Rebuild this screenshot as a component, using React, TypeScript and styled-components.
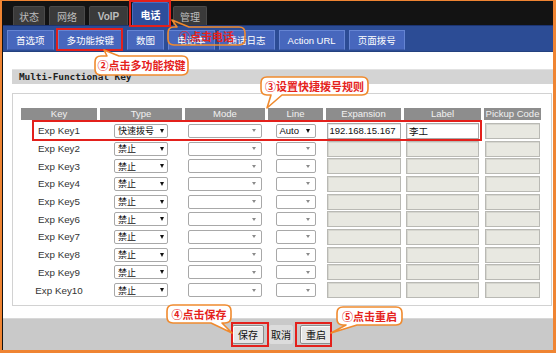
import React from 'react';
import styled, { createGlobalStyle } from 'styled-components';

const CJK = `"Noto Sans CJK SC", "Liberation Sans", sans-serif`;
const LATIN = `"Liberation Sans", "Noto Sans CJK SC", sans-serif`;

const GlobalStyle = createGlobalStyle`
  html, body { margin: 0; padding: 0; background: #ffffff; }
  body { font-family: ${LATIN}; }
`;

const Page = styled.div`
  position: relative;
  width: 556px;
  height: 353px;
  overflow: hidden;
`;

const Frame = styled.div`
  width: 556px;
  height: 353px;
  box-sizing: border-box;
  border-style: solid;
  border-color: #ef8432;
  border-width: 1px 3px 3px 2px;
  background: #fff;
`;

const Screen = styled.div`
  display: flex;
  flex-direction: column;
  height: 100%;
  border-left: 1px solid #111;
`;

const TopBar = styled.div`
  height: 24px;
  flex: none;
  background: #131313;
  display: flex;
  align-items: flex-end;
  gap: 4px;
  padding-left: 10px;
`;

const TopTab = styled.div<{ $w: number; $active?: boolean }>`
  width: ${(p) => p.$w}px;
  height: ${(p) => (p.$active ? 23 : 19)}px;
  box-sizing: border-box;
  display: flex;
  align-items: center;
  justify-content: center;
  font-family: ${CJK};
  font-size: 10px;
  font-weight: ${(p) => (p.$active ? 700 : 400)};
  color: ${(p) => (p.$active ? '#ffffff' : '#bdbdbd')};
  background: ${(p) => (p.$active ? '#2d4e9c' : '#3a3a3a')};
  border: 1px solid ${(p) => (p.$active ? '#4a6cc0' : '#4a4a4a')};
  border-bottom: none;
  border-radius: 2px 2px 0 0;
`;

const TopTabLatin = styled(TopTab)`
  font-family: ${LATIN};
  font-weight: 700;
`;

const SubBar = styled.div`
  height: 27px;
  flex: none;
  box-sizing: border-box;
  background: #2c4c95;
  border-top: 1px solid #1c3472;
  border-bottom: 1px solid #24417f;
  display: flex;
  align-items: flex-start;
  gap: 4px;
  padding: 4px 0 0 4px;
`;

const SubTab = styled.div<{ $latin?: boolean }>`
  height: 20px;
  box-sizing: border-box;
  padding: 0 8px;
  display: flex;
  align-items: center;
  font-family: ${(p) => (p.$latin ? LATIN : CJK)};
  font-size: 9.5px;
  color: #ffffff;
  background: #4767bd;
  border: 1px solid #6584d2;
  border-bottom-color: #3c5aa8;
`;

const Content = styled.div`
  flex: 1;
  background: #ffffff;
  padding: 17px 0 0 9px;
  display: flex;
  flex-direction: column;
`;

const SectionTitle = styled.div`
  height: 15px;
  background: #d4d4d4;
  border-top: 1px solid #e2e2e2;
  box-sizing: border-box;
  padding-left: 7px;
  font-family: "DejaVu Sans Mono", monospace;
  font-weight: 700;
  font-size: 9.5px;
  letter-spacing: -0.1px;
  line-height: 14px;
  color: #222;
`;

const KeyBox = styled.div`
  margin-top: 9px;
  width: 540px;
  height: 213px;
  box-sizing: border-box;
  border: 1px solid #d2d2d2;
  padding: 14px 0 0 8px;
`;

const KeyGrid = styled.div`
  display: grid;
  grid-template-columns: 76px 82px 80px 55px 75px 77px 57px;
  column-gap: 3px;
  grid-template-rows: 14px;
  grid-auto-rows: 17.7px;
`;

const HeadCell = styled.div`
  height: 12px;
  align-self: start;
  background: #8d8d8d;
  color: #f1f1f1;
  font-family: ${LATIN};
  font-size: 9.5px;
  line-height: 12px;
  text-align: center;
`;

const Cell = styled.div`
  display: flex;
  align-items: center;
  justify-content: center;
`;

const KeyName = styled.span`
  font-family: ${LATIN};
  font-size: 9.8px;
  color: #333;
`;

const Select = styled.div<{ $w: number; $latin?: boolean }>`
  width: ${(p) => p.$w}px;
  height: 14px;
  box-sizing: border-box;
  border: 1px solid #a8a8a8;
  border-radius: 2px;
  background: #ffffff;
  display: flex;
  align-items: center;
  padding-left: 3px;
  font-family: ${(p) => (p.$latin ? LATIN : CJK)};
  font-size: ${(p) => (p.$latin ? 9.5 : 9)}px;
  color: #111;
  white-space: nowrap;
  overflow: hidden;
`;

const Arrow = styled.span<{ $dim?: boolean; $mr: number }>`
  flex: none;
  margin-left: auto;
  margin-right: ${(p) => p.$mr}px;
  width: 0;
  height: 0;
  border-left: ${(p) => (p.$dim ? 2 : 2.5)}px solid transparent;
  border-right: ${(p) => (p.$dim ? 2 : 2.5)}px solid transparent;
  border-top: ${(p) => (p.$dim ? 3.5 : 4)}px solid ${(p) => (p.$dim ? '#8a8a8a' : '#111')};
`;

const Field = styled.div<{ $w: number; $filled?: boolean; $cjk?: boolean }>`
  width: ${(p) => p.$w}px;
  height: 16px;
  box-sizing: border-box;
  border: 1px solid ${(p) => (p.$filled ? '#a8a8a8' : '#b9b9b4')};
  box-shadow: inset 1px 1px 0 ${(p) => (p.$filled ? '#e6e6e6' : '#d6d6cf')};
  background: ${(p) => (p.$filled ? '#ffffff' : '#e8e8e1')};
  display: flex;
  align-items: center;
  padding-left: 2px;
  font-family: ${(p) => (p.$cjk ? CJK : LATIN)};
  font-size: 9.5px;
  color: #111;
  white-space: nowrap;
`;

const BottomBar = styled.div`
  height: 32px;
  flex: none;
  background: #c9c9c9;
  border-top: 1px solid #d8d8d8;
  box-sizing: border-box;
  display: flex;
  align-items: center;
  justify-content: center;
  gap: 5px;
  padding-left: 8px;
`;

const Button = styled.div<{ $flat?: boolean }>`
  height: 19px;
  box-sizing: border-box;
  padding: 0 ${(p) => (p.$flat ? 1 : 5)}px;
  display: flex;
  align-items: center;
  font-family: ${CJK};
  font-size: 10px;
  color: #111;
  background: ${(p) => (p.$flat ? '#dcdcdc' : '#e6e6e6')};
  border: 1px solid ${(p) => (p.$flat ? '#dcdcdc' : '#8c8c8c')};
  border-radius: 2px;
  box-shadow: ${(p) => (p.$flat ? 'none' : 'inset 1px 1px 0 #fafafa')};
  margin-right: ${(p) => (p.$flat ? 2 : 0)}px;
`;

/* ---------- annotations (lie over the page) ---------- */

const RedBox = styled.div<{ $x: number; $y: number; $w: number; $h: number }>`
  position: absolute;
  left: ${(p) => p.$x}px;
  top: ${(p) => p.$y}px;
  width: ${(p) => p.$w}px;
  height: ${(p) => p.$h}px;
  box-sizing: border-box;
  border: 2px solid #e3201b;
  pointer-events: none;
`;

const Bubble = styled.div<{ $x: number; $y: number; $w: number; $h: number }>`
  position: absolute;
  left: ${(p) => p.$x}px;
  top: ${(p) => p.$y}px;
  width: ${(p) => p.$w}px;
  height: ${(p) => p.$h}px;
  display: flex;
  align-items: center;
  justify-content: center;
  pointer-events: none;
`;

const BubbleShape = styled.svg`
  position: absolute;
  left: 0;
  top: 0;
  overflow: visible;
`;

const BubbleText = styled.span`
  position: relative;
  font-family: ${CJK};
  font-weight: 700;
  font-size: 11px;
  color: #e5231d;
  white-space: nowrap;
  line-height: 1;
`;

type Tail = { edge: 'top' | 'bottom'; a: number; b: number; tx: number; ty: number };

function bubblePath(w: number, h: number, r: number, t: Tail) {
  const top = t.edge === 'top' ? `L${t.a},0 L${t.tx},${t.ty} L${t.b},0 ` : '';
  const bottom = t.edge === 'bottom' ? `L${t.b},${h} L${t.tx},${t.ty} L${t.a},${h} ` : '';
  return `M${r},0 ${top}L${w - r},0 Q${w},0 ${w},${r} L${w},${h - r} Q${w},${h} ${w - r},${h} ${bottom}L${r},${h} Q0,${h} 0,${h - r} L0,${r} Q0,0 ${r},0 Z`;
}

function Callout(props: {
  x: number; y: number; w: number; h: number; tail: Tail; text: string; clear?: boolean;
}) {
  const { x, y, w, h, tail, text, clear } = props;
  return (
    <Bubble $x={x} $y={y} $w={w} $h={h}>
      <BubbleShape width={w} height={h}>
        <path
          d={bubblePath(w, h, 6, tail)}
          fill={clear ? 'none' : '#ffffff'}
          stroke="#f08a2e"
          strokeWidth={1.6}
          strokeLinejoin="round"
        />
      </BubbleShape>
      <BubbleText>{text}</BubbleText>
    </Bubble>
  );
}

type Row = { key: string; type: string; line?: string; exp?: string; label?: string };

const rows: Row[] = [
  { key: 'Exp Key1', type: '快速拨号', line: 'Auto', exp: '192.168.15.167', label: '李工' },
  ...Array.from({ length: 9 }, (_, i) => ({ key: `Exp Key${i + 2}`, type: '禁止' })),
];

const heads = ['Key', 'Type', 'Mode', 'Line', 'Expansion', 'Label', 'Pickup Code'];
const subTabs = ['首选项', '多功能按键', '数图', '电话本', '通话日志', 'Action URL', '页面拨号'];

export default function App() {
  return (
    <Page>
      <GlobalStyle />
      <Frame>
        <Screen>
          <TopBar>
            <TopTab $w={32}>状态</TopTab>
            <TopTab $w={36}>网络</TopTab>
            <TopTabLatin $w={39}>VoIP</TopTabLatin>
            <TopTab $w={37} $active>电话</TopTab>
            <TopTab $w={34}>管理</TopTab>
          </TopBar>
          <SubBar>
            {subTabs.map((t) => (
              <SubTab key={t} $latin={t === 'Action URL'}>{t}</SubTab>
            ))}
          </SubBar>
          <Content>
            <SectionTitle>Multi-Functional Key</SectionTitle>
            <KeyBox>
              <KeyGrid>
                {heads.map((h) => (
                  <HeadCell key={h}>{h}</HeadCell>
                ))}
                {rows.map((r) => (
                  <React.Fragment key={r.key}>
                    <Cell><KeyName>{r.key}</KeyName></Cell>
                    <Cell>
                      <Select $w={54}>{r.type}<Arrow $mr={3} /></Select>
                    </Cell>
                    <Cell>
                      <Select $w={74}><Arrow $dim $mr={5} /></Select>
                    </Cell>
                    <Cell>
                      <Select $w={40} $latin>
                        {r.line}
                        <Arrow $dim={!r.line} $mr={5} />
                      </Select>
                    </Cell>
                    <Cell>
                      <Field $w={74} $filled={!!r.exp}>{r.exp}</Field>
                    </Cell>
                    <Cell>
                      <Field $w={73} $filled={!!r.label} $cjk>{r.label}</Field>
                    </Cell>
                    <Cell>
                      <Field $w={55} />
                    </Cell>
                  </React.Fragment>
                ))}
              </KeyGrid>
            </KeyBox>
          </Content>
          <BottomBar>
            <Button>保存</Button>
            <Button $flat>取消</Button>
            <Button>重启</Button>
          </BottomBar>
        </Screen>
      </Frame>

      <RedBox $x={129} $y={0} $w={42} $h={27} />
      <RedBox $x={56} $y={28} $w={67} $h={23} />
      <RedBox $x={32} $y={120} $w={450} $h={21} />
      <RedBox $x={231} $y={322} $w={38} $h={25} />
      <RedBox $x={295} $y={322} $w={37} $h={25} />

      <Callout x={168} y={27} w={77} h={18} clear
        tail={{ edge: 'top', a: 9, b: 21, tx: 4, ty: -7 }} text="①点击电话" />
      <Callout x={95} y={56} w={93} h={19}
        tail={{ edge: 'top', a: 12, b: 24, tx: 9, ty: -6 }} text="②点击多功能按键" />
      <Callout x={261} y={77} w={107} h={18}
        tail={{ edge: 'bottom', a: 10, b: 21, tx: 6, ty: 31 }} text="③设置快捷拨号规则" />
      <Callout x={167} y={305} w={64} h={18}
        tail={{ edge: 'bottom', a: 44, b: 55, tx: 65, ty: 28 }} text="④点击保存" />
      <Callout x={337} y={307} w={65} h={18}
        tail={{ edge: 'bottom', a: 9, b: 20, tx: -6, ty: 26 }} text="⑤点击重启" />
    </Page>
  );
}
